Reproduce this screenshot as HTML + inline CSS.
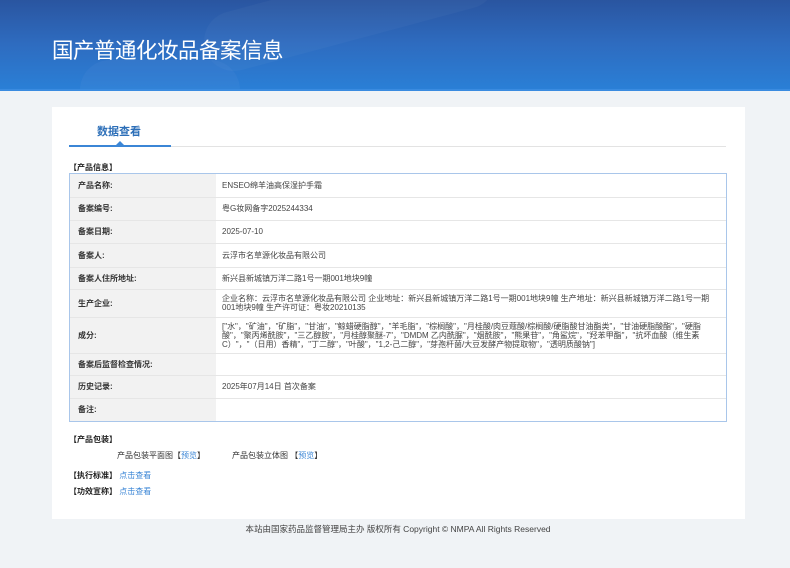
<!DOCTYPE html>
<html><head><meta charset="utf-8"><style>
*{margin:0;padding:0;box-sizing:border-box}
body{width:790px;height:568px;background:#f0f3f6;font-family:"Liberation Sans","Noto Sans CJK SC",sans-serif;position:relative;overflow:hidden;color:#333}
.hdr{position:absolute;left:0;top:0;width:790px;height:91px;background:linear-gradient(180deg,#2a55a0 0%,#2e6cc0 50%,#2a7fd6 100%);border-bottom:2px solid #3a8be0;overflow:hidden}
.hdr h1{position:absolute;left:52px;top:34px;font-size:21.5px;font-weight:normal;color:#fff;letter-spacing:-0.5px;font-family:"Noto Sans CJK SC",sans-serif}
.blob{position:absolute;border-radius:30px;background:rgba(255,255,255,0.03)}
.card{position:absolute;left:52px;top:107px;width:693px;height:412px;background:#fff}
.tab{position:absolute;left:97px;top:123px;font-size:11px;font-weight:bold;color:#2d6fb8}
.tline{position:absolute;left:69px;top:146px;width:657px;height:1px;background:#e3e3e3}
.tsel{position:absolute;left:69px;top:145px;width:102px;height:2px;background:#3b86d6}
.tri{position:absolute;left:116px;top:141px;width:0;height:0;border-left:4px solid transparent;border-right:4px solid transparent;border-bottom:4px solid #3b86d6}
.sec{position:absolute;left:69px;font-size:8px;font-weight:bold;color:#222}
.tw{position:absolute;left:69px;top:173px;width:658px;border:1px solid #a9c6ea}
table{width:100%;border-collapse:collapse;font-size:8px}
td{border-bottom:1px solid #e6e6e6;vertical-align:middle;line-height:9px}
tr:last-child td{border-bottom:none}
td.l{width:146px;background:#f2f2f2;font-weight:bold;padding-left:8px;color:#333}
td.v{padding-left:6px;padding-right:12px;color:#444;font-size:8px}
.t{position:absolute;font-size:8px;color:#333}
a{color:#3b86d6;text-decoration:none}
.foot{position:absolute;top:523px;left:0;width:790px;text-align:center;font-size:8.5px;color:#444;padding-left:6px}
</style></head><body>
<div class="hdr">
<div class="blob" style="left:200px;top:-20px;width:300px;height:60px;transform:rotate(-15deg)"></div>
<div class="blob" style="left:80px;top:60px;width:160px;height:60px;background:rgba(120,160,230,0.1)"></div>
<h1>国产普通化妆品备案信息</h1></div>
<div class="card"></div>
<div class="tab">数据查看</div>
<div class="tline"></div><div class="tsel"></div><div class="tri"></div>
<div class="sec" style="top:162px">【产品信息】</div>
<div class="tw"><table>
<tr style="height:23px"><td class="l">产品名称:</td><td class="v">ENSEO绵羊油高保湿护手霜</td></tr>
<tr style="height:23px"><td class="l">备案编号:</td><td class="v">粤G妆网备字2025244334</td></tr>
<tr style="height:23px"><td class="l">备案日期:</td><td class="v">2025-07-10</td></tr>
<tr style="height:24px"><td class="l">备案人:</td><td class="v">云浮市名草源化妆品有限公司</td></tr>
<tr style="height:22px"><td class="l">备案人住所地址:</td><td class="v">新兴县新城镇万洋二路1号一期001地块9幢</td></tr>
<tr style="height:28px"><td class="l">生产企业:</td><td class="v">企业名称：云浮市名草源化妆品有限公司 企业地址：新兴县新城镇万洋二路1号一期001地块9幢 生产地址：新兴县新城镇万洋二路1号一期001地块9幢 生产许可证：粤妆20210135</td></tr>
<tr style="height:36px"><td class="l">成分:</td><td class="v">["水"，"矿油"，"矿脂"，"甘油"，"鲸蜡硬脂醇"，"羊毛脂"，"棕榈酸"，"月桂酸/肉豆蔻酸/棕榈酸/硬脂酸甘油酯类"，"甘油硬脂酸酯"，"硬脂酸"，"聚丙烯酰胺"，"三乙醇胺"，"月桂醇聚醚-7"，"DMDM 乙内酰脲"，"烟酰胺"，"熊果苷"，"角鲨烷"，"羟苯甲酯"，"抗坏血酸（维生素C）"，"（日用）香精"，"丁二醇"，"叶酸"，"1,2-己二醇"，"芽孢杆菌/大豆发酵产物提取物"，"透明质酸钠"]</td></tr>
<tr style="height:22px"><td class="l">备案后监督检查情况:</td><td class="v"></td></tr>
<tr style="height:23px"><td class="l">历史记录:</td><td class="v">2025年07月14日 首次备案</td></tr>
<tr style="height:23px"><td class="l">备注:</td><td class="v"></td></tr>
</table></div>
<div class="sec" style="top:434px">【产品包装】</div>
<div class="t" style="left:117px;top:450px">产品包装平面图【<a>预览</a>】</div>
<div class="t" style="left:232px;top:450px">产品包装立体图 【<a>预览</a>】</div>
<div class="sec" style="top:470px">【执行标准】 <a style="font-weight:normal">点击查看</a></div>
<div class="sec" style="top:486px">【功效宣称】 <a style="font-weight:normal">点击查看</a></div>
<div class="foot">本站由国家药品监督管理局主办 版权所有 Copyright © NMPA All Rights Reserved</div>
</body></html>
